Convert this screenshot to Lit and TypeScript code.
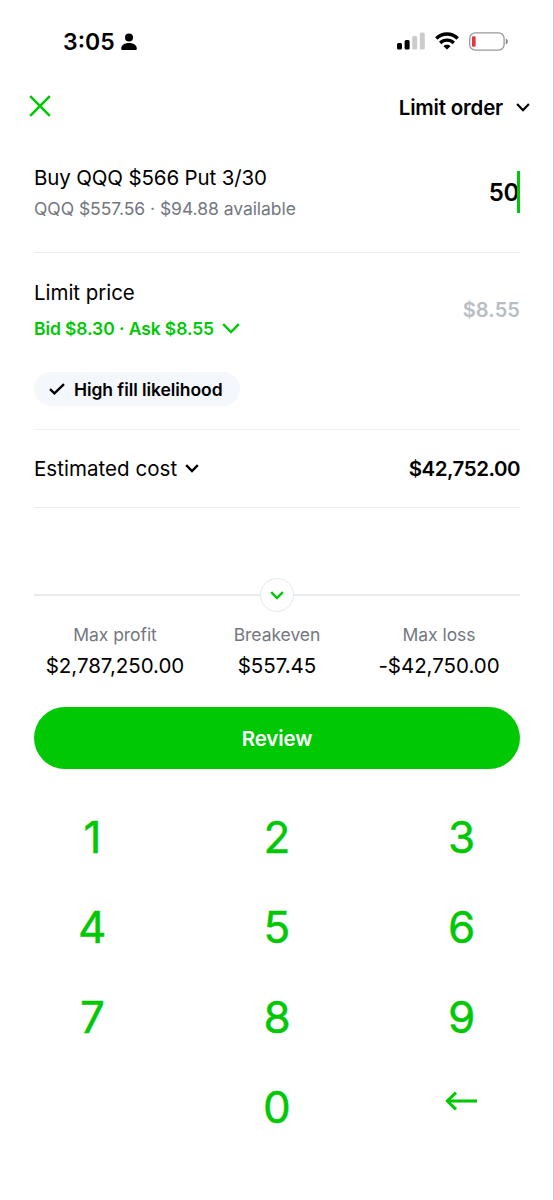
import { LitElement, html, css, svg } from "lit";

const chevron = (w: number, h: number, sw: number) => html`<svg width=${w} height=${h} viewBox="0 0 ${w} ${h}" fill="none" stroke="currentColor" stroke-width=${sw}>
  ${svg`<path d="M${sw * 0.5} ${sw * 0.5}L${w / 2} ${h - sw * 0.8}L${w - sw * 0.5} ${sw * 0.5}"/>`}
</svg>`;

class StatusBar extends LitElement {
  static styles = css`
    :host { display: flex; height: 83px; align-items: center; padding: 0 45px 0 63px; box-sizing: border-box; }
    .time { font-size: 23px; font-weight: 600; line-height: 28px; }
    .person { margin-left: 6px; }
    .spacer { flex: 1; }
    .signal, .wifi { margin-bottom: 1px; }
    .wifi { margin-left: 10px; }
    .battery { margin-left: 10px; margin-bottom: 1px; }
    svg { display: block; }
  `;
  render() {
    return html`
      <span class="time">3:05</span>
      <svg class="person" width="16" height="18" viewBox="0 0 16 18"><circle cx="8" cy="4.5" r="4"/><path d="M0.2 15.5C0.2 12.2 3.5 10 8 10s7.800 2.200 7.800 5.500c0 1-.6 1.500-1.600 1.500H1.800C.8 17 .2 16.500 .2 15.500Z"/></svg>
      <span class="spacer"></span>
      <svg class="signal" width="28" height="18" viewBox="0 0 28 18">
        <rect x="0" y="11" width="5" height="6.500" rx="1.500"/>
        <rect x="7.600" y="8" width="5" height="9.500" rx="1.500"/>
        <rect x="15.200" y="4" width="5" height="13.500" rx="1.500" fill="#ccc"/>
        <rect x="22.800" y="0.600" width="5" height="16.900" rx="1.500" fill="#ccc"/>
      </svg>
      <svg class="wifi" width="24" height="18" viewBox="0 0 24 18" fill="none" stroke="#000" stroke-width="3.400">
        <path d="M1.300 6.500C7.300 .5 16.700 .5 22.700 6.500"/>
        <path d="M5.200 10.900C9.100 7.200 14.900 7.200 18.800 10.900"/>
        <path d="M12 17.500L8.500 14.200C10.300 12.300 13.700 12.300 15.500 14.200Z" fill="#000" stroke="none"/>
      </svg>
      <svg class="battery" width="39" height="19" viewBox="0 0 39 19">
        <rect x=".7" y=".9" width="34.400" height="17.200" rx="5.600" fill="none" stroke="#999" stroke-width="1.300"/>
        <rect x="3" y="4.300" width="3.600" height="10.400" rx="1.200" fill="#f0303a"/>
        <path d="M36.800 6.500c1.400.5 2 1.600 2 3s-.6 2.500-2 3Z" fill="#888"/>
      </svg>`;
  }
}
customElements.define("status-bar", StatusBar);

class NumberPad extends LitElement {
  static styles = css`
    :host { display: grid; grid-template-columns: repeat(3, 1fr); grid-auto-rows: 90px; color: #00c805; }
    .key { display: flex; align-items: center; justify-content: center; font-size: 44px; font-weight: 400; -webkit-text-stroke: 0.5px #00c805; line-height: 54px; }
    .back { padding-bottom: 12px; }
  `;
  render() {
    return html`
      ${["1", "2", "3", "4", "5", "6", "7", "8", "9", "", "0"].map((k) => html`<div class="key">${k}</div>`)}
      <div class="key back">
        <svg width="34" height="20" viewBox="0 0 34 20" fill="none" stroke="currentColor" stroke-width="3.100" stroke-linejoin="round">
          <path d="M32 10H2.500"/><path d="M11 1.600L2.200 10l8.800 8.400"/>
        </svg>
      </div>`;
  }
}
customElements.define("number-pad", NumberPad);

class AppRoot extends LitElement {
  static styles = css`
    :host {
      display: block; box-sizing: border-box; height: 1200px; overflow: hidden;
      background: #fff; color: #000; border-right: 1px solid #c8c8ca;
      font-family: Inter, "Liberation Sans", sans-serif; font-size: 20.5px; white-space: nowrap;
    }
    svg { display: block; flex: none; }
    .header { display: flex; align-items: center; justify-content: space-between; height: 49px; padding: 0 23px 0 28.5px; }
    .close { color: #00c805; margin-bottom: 3px; }
    .type { display: flex; align-items: center; gap: 13px; font-weight: 600; letter-spacing: -0.2px; }
    .body { padding: 0 33px 0 34px; }
    .row { display: flex; align-items: center; justify-content: space-between; box-sizing: border-box; border-bottom: 1px solid #e8edf0; }
    .buy { height: 121px; }
    .buy .title { line-height: 31px; padding-top: 1px; letter-spacing: -0.14px; }
    .sub { font-size: 17.5px; line-height: 31px; letter-spacing: -0.04px; color: #737780; }
    .qty { display: flex; align-items: center; font-size: 24px; font-weight: 600; letter-spacing: -0.3px; }
    .caret { width: 3px; height: 42px; margin-left: -2px; margin-bottom: 1px; background: #00c805; }
    .limit { height: 177px; border-bottom: 1px solid #eff0f1; padding-top: 22px; align-items: flex-start; }
    .limit .title { line-height: 36px; letter-spacing: -0.04px; }
    .quote { display: flex; align-items: center; gap: 8px; font-size: 17.5px; line-height: 35px; font-weight: 600; letter-spacing: -0.1px; color: #00c805; }
    .pill { display: flex; align-items: center; gap: 9px; width: 206px; height: 34px; box-sizing: border-box; padding-left: 15px; margin-top: 26px; border-radius: 17px; background: #f4f7fb; font-size: 17.5px; font-weight: 600; letter-spacing: -0.07px; }
    .price { padding-top: 18px; line-height: 34px; font-size: 20px; font-weight: 600; letter-spacing: 0.1px; color: #b6bdc3; }
    .cost { height: 78px; border-bottom-color: #ebeced; }
    .cost .label { display: flex; align-items: center; gap: 8px; letter-spacing: 0.04px; }
    .total { font-weight: 600; letter-spacing: -0.48px; }
    .divider { display: flex; align-items: center; height: 34px; margin-top: 70px; }
    .line { flex: 1; height: 2px; background: #e8ecf1; }
    .knob { display: flex; align-items: center; justify-content: center; width: 34px; height: 34px; box-sizing: border-box; border: 1.500px solid #e3e8ee; border-radius: 50%; color: #00c805; }
    .stats { display: grid; grid-template-columns: repeat(3, 1fr); margin-top: 7px; text-align: center; }
    .stat .name { font-size: 17.5px; line-height: 31px; letter-spacing: -0.05px; color: #737780; }
    .stat .value { line-height: 32px; letter-spacing: -0.02px; }
    .review { display: flex; align-items: center; justify-content: center; height: 62px; box-sizing: border-box; margin-top: 25px; border-radius: 31px; background: #00c805; color: #fff; font-weight: 600; letter-spacing: -0.1px; }
    .pad { margin-top: 23px; margin-right: -1px; }
  `;
  render() {
    const stats = [["Max profit", "$2,787,250.00"], ["Breakeven", "$557.45"], ["Max loss", "-$42,750.00"]];
    return html`
      <status-bar></status-bar>
      <div class="header">
        <svg class="close" width="22" height="22" viewBox="0 0 22 22" fill="none" stroke="currentColor" stroke-width="2.600"><path d="M1.200 1.200L20.800 20.800M20.800 1.200L1.200 20.800"/></svg>
        <div class="type">Limit order ${chevron(14, 9, 2.2)}</div>
      </div>
      <div class="body">
        <div class="row buy">
          <div><div class="title">Buy QQQ $566 Put 3/30</div><div class="sub">QQQ $557.56 · $94.88 available</div></div>
          <div class="qty">50<span class="caret"></span></div>
        </div>
        <div class="row limit">
          <div>
            <div class="title">Limit price</div>
            <div class="quote">Bid $8.30 · Ask $8.55 ${chevron(18, 11, 2.4)}</div>
            <div class="pill"><svg width="16" height="12" viewBox="0 0 16 12" fill="none" stroke="currentColor" stroke-width="2.400"><path d="M1 6.200L5.400 10.300L15 1.200"/></svg><span>High fill likelihood</span></div>
          </div>
          <div class="price">$8.55</div>
        </div>
        <div class="row cost"><div class="label">Estimated cost ${chevron(14, 9, 2.4)}</div><div class="total">$42,752.00</div></div>
        <div class="divider"><span class="line"></span><span class="knob">${chevron(14, 9, 2.4)}</span><span class="line"></span></div>
        <div class="stats">${stats.map(([n, v]) => html`<div class="stat"><div class="name">${n}</div><div class="value">${v}</div></div>`)}</div>
        <div class="review">Review</div>
      </div>
      <number-pad class="pad"></number-pad>`;
  }
}
customElements.define("app-root", AppRoot);
